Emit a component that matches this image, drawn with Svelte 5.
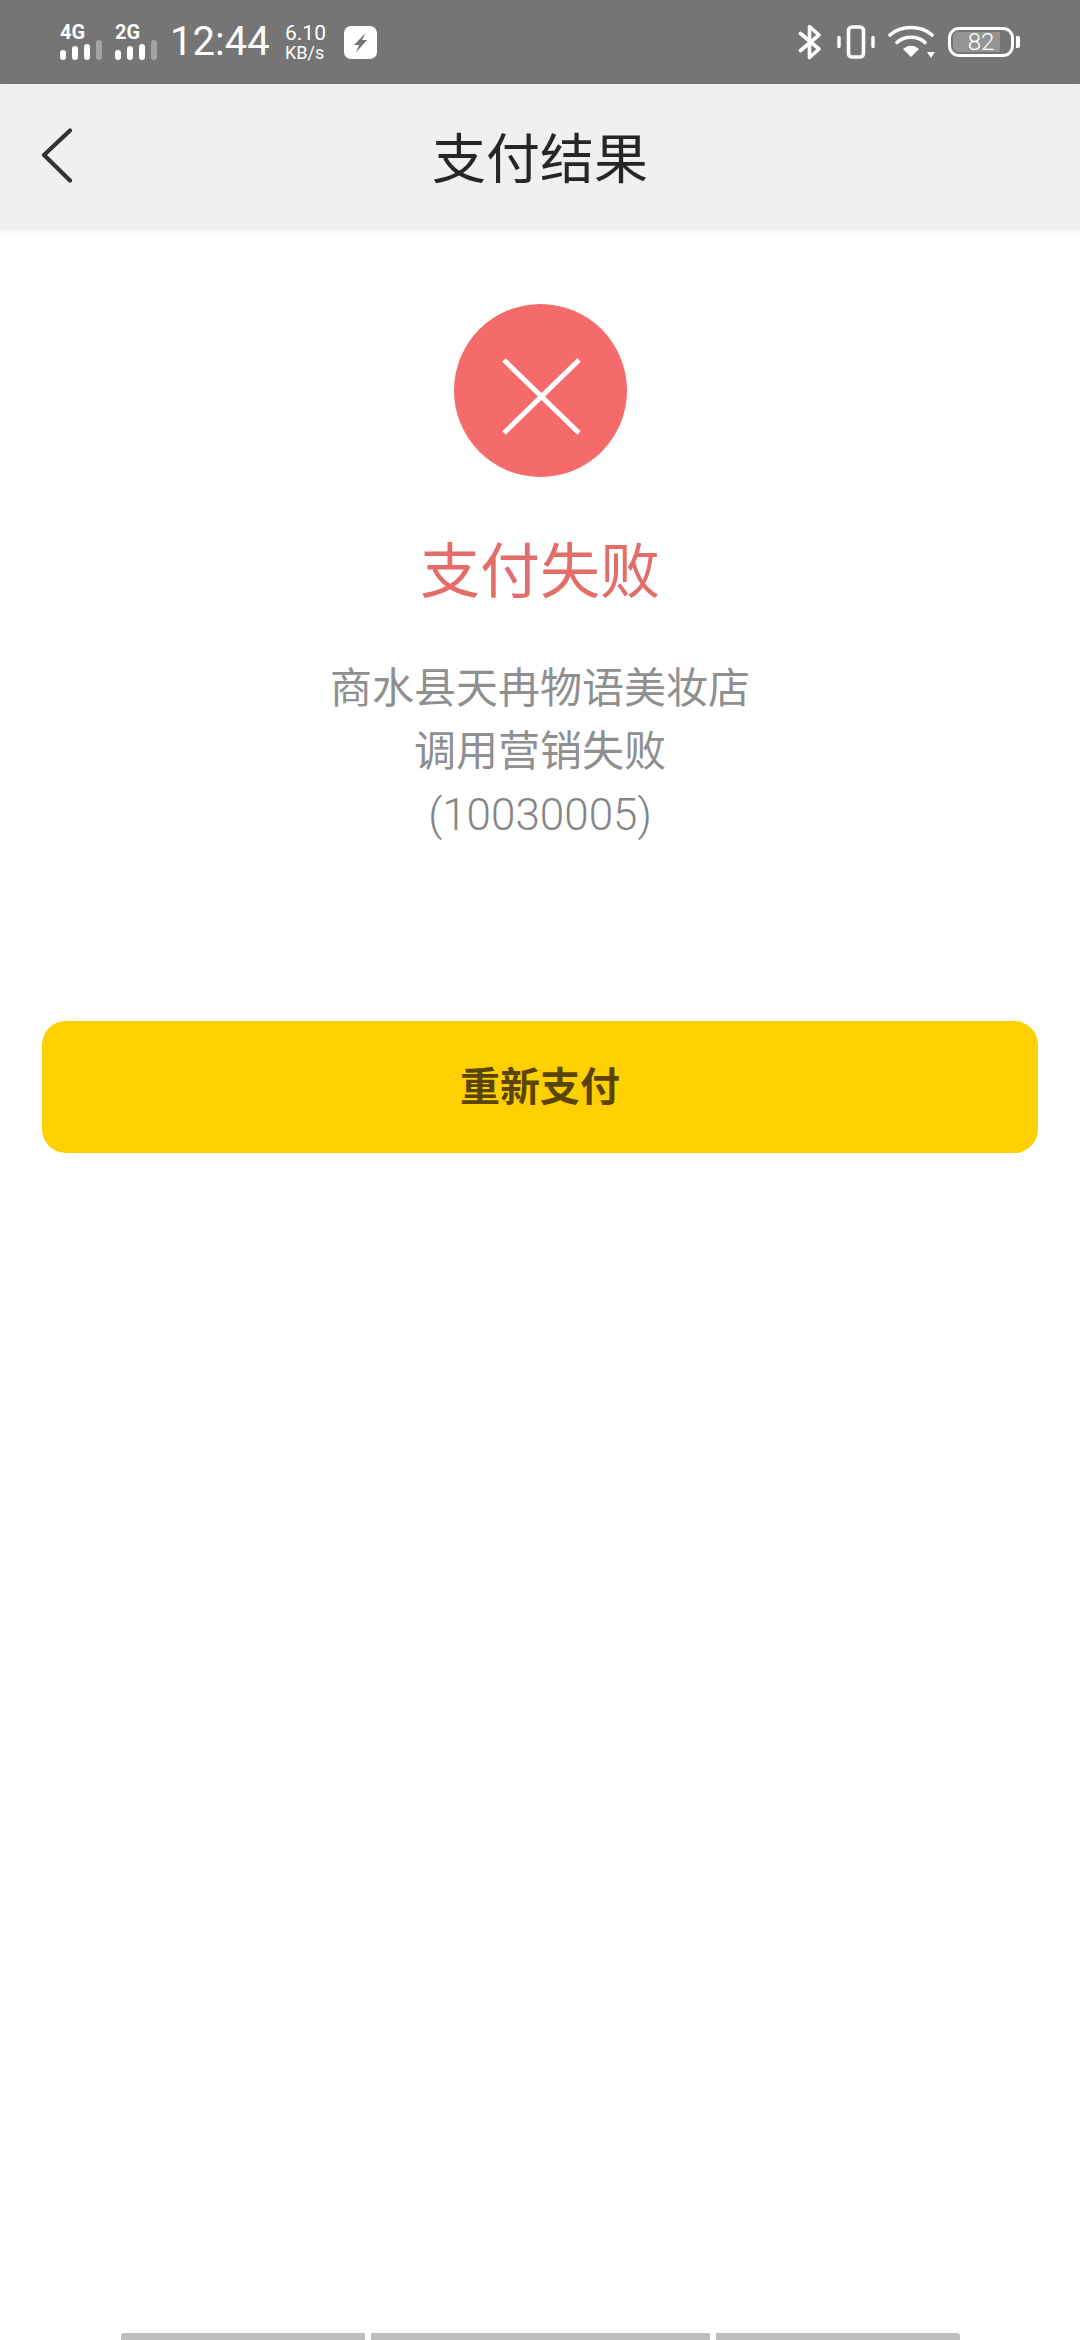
<script lang="ts">
  const signals = [
    { label: '4G', dim: 3 },
    { label: '2G', dim: 3 },
  ];
  const heights = [10, 14, 16, 20];
  const shopLines = ['商水县天冉物语美妆店', '调用营销失败'];
</script>

<div class="page">
  <div class="status">
    <div class="status-left">
      {#each signals as s}
        <div class="signal">
          <span class="net">{s.label}</span>
          <div class="bars">
            {#each heights as h, i}
              <i class:dim={i === s.dim} style="height:{h}px"></i>
            {/each}
          </div>
        </div>
      {/each}
      <span class="time">12:44</span>
      <div class="speed"><span>6.10</span><span class="unit">KB/s</span></div>
      <div class="app-icon">
        <svg viewBox="0 0 33 33" width="33" height="33">
          <path d="M21.5 7 L10 19 H15 L12 26.5 L23 14 H18 Z" fill="#757575" />
        </svg>
      </div>
    </div>
    <div class="status-right">
      <svg class="bt" viewBox="0 0 24 36" width="24" height="36" fill="none" stroke="#fff" stroke-width="3.6" stroke-linecap="round" stroke-linejoin="round">
        <path d="M2.5 9.5 L21 25 L11.5 33.5 V2.5 L21 11 L2.5 26.5" />
      </svg>
      <svg class="vib" viewBox="0 0 38 34" width="38" height="34" fill="none" stroke="#fff">
        <rect x="11.5" y="2" width="15" height="30" rx="3.5" stroke-width="3.6" />
        <path d="M2 12.5 V21.5 M36 12.5 V21.5" stroke-width="3.4" stroke-linecap="round" />
      </svg>
      <svg class="wifi" viewBox="0 0 48 34" width="48" height="34">
        <g fill="none" stroke="#fff" stroke-width="3.6" stroke-linecap="round">
          <path d="M2 10 C13 0 33 0 44 10" />
          <path d="M9 17.5 C16 10.5 30 10.5 37 17.5" />
        </g>
        <path d="M15 24 C20 19.5 26 19.5 31 24 L23 32 Z" fill="#fff" />
        <path d="M39 27 H47 L43 33 Z" fill="#fff" />
      </svg>
      <div class="battery">
        <div class="shell">
          <div class="level"></div>
          <span>82</span>
        </div>
        <div class="tip"></div>
      </div>
    </div>
  </div>

  <header class="nav">
    <svg class="back" viewBox="0 0 32 56" width="32" height="56" fill="none" stroke="#333" stroke-width="4.2" stroke-linecap="round" stroke-linejoin="round">
      <path d="M29 2.5 L3 27 L29 52.5" />
    </svg>
    <h1>支付结果</h1>
  </header>

  <main class="result">
    <div class="fail-icon">
      <svg viewBox="0 0 173 173" width="173" height="173" stroke="#fff" stroke-width="5">
        <path d="M50 56 L125 129 M125 56 L50 129" />
      </svg>
    </div>
    <h2>支付失败</h2>
    <div class="message">
      {#each shopLines as line}
        <p>{line}</p>
      {/each}
      <p class="code">(10030005)</p>
    </div>
    <button type="button" class="retry">重新支付</button>
  </main>

  <footer class="home-bar">
    <span class="seg a"></span>
    <span class="seg b"></span>
    <span class="seg c"></span>
  </footer>
</div>

<style>
  :global(body) {
    margin: 0;
    background: #fff;
  }
  .page {
    width: 1080px;
    height: 2340px;
    overflow: hidden;
    display: flex;
    flex-direction: column;
    background: #fff;
    font-family: "Noto Sans CJK SC", "Liberation Sans", sans-serif;
  }

  .status {
    height: 84px;
    flex: none;
    box-sizing: border-box;
    padding: 0 60px;
    background: #757575;
    color: #fff;
    display: flex;
    justify-content: space-between;
    align-items: center;
    font-family: Roboto, "Liberation Sans", sans-serif;
  }
  .status-left, .status-right { display: flex; align-items: center; }

  .signal {
    width: 42px;
    margin-right: 13px;
    display: flex;
    flex-direction: column;
    gap: 0;
  }
  .net {
    font-size: 20px;
    line-height: 16px;
    font-weight: 700;
  }
  .bars {
    display: flex;
    align-items: flex-end;
    gap: 6px;
    height: 20px;
  }
  .bars i {
    width: 6px;
    background: #fff;
    border-radius: 3px;
  }
  .bars i.dim { background: #a3a3a3; }

  .time {
    width: 115px;
    font-size: 40px;
    font-weight: 400;
    line-height: 44px;
  }
  .speed {
    width: 59px;
    display: flex;
    flex-direction: column;
    font-size: 21px;
    line-height: 21px;
    font-weight: 400;
  }
  .speed .unit { font-size: 18px; line-height: 18px; }
  .app-icon {
    width: 33px;
    height: 33px;
    background: #fff;
    border-radius: 7px;
  }
  .app-icon svg { display: block; }

  .bt { margin-right: 15px; }
  .vib { margin-right: 13px; }
  .wifi { margin-right: 12px; }
  .battery { display: flex; align-items: center; gap: 2px; }
  .shell {
    position: relative;
    width: 66px;
    height: 30px;
    box-sizing: border-box;
    border: 3px solid #fff;
    border-radius: 11px;
    display: flex;
    align-items: center;
    justify-content: center;
    overflow: hidden;
  }
  .level {
    position: absolute;
    left: 2px;
    top: 2px;
    bottom: 2px;
    width: 47px;
    background: #959595;
    border-radius: 5px 0 0 5px;
  }
  .shell span {
    position: relative;
    font-size: 24px;
    font-weight: 300;
    line-height: 24px;
  }
  .tip {
    width: 4px;
    height: 12px;
    background: #fff;
    border-radius: 0 2px 2px 0;
  }

  .nav {
    position: relative;
    height: 146px;
    flex: none;
    box-sizing: border-box;
    padding-bottom: 3px;
    background: #f0f0f0;
    display: flex;
    align-items: center;
    justify-content: center;
    box-shadow: 0 1px 5px rgba(0, 0, 0, 0.08);
  }
  .back {
    position: absolute;
    left: 41px;
    top: 44px;
  }
  .nav h1 {
    margin: 0;
    font-size: 54px;
    font-weight: 400;
    color: #262626;
    line-height: 1;
  }

  .result {
    flex: 1;
    display: flex;
    flex-direction: column;
    align-items: center;
    padding: 74px 42px 0;
  }
  .fail-icon {
    width: 173px;
    height: 173px;
    border-radius: 50%;
    background: #f56a6a;
  }
  .fail-icon svg { display: block; }
  .result h2 {
    margin: 48px 0 0;
    font-size: 60px;
    font-weight: 400;
    line-height: 84px;
    color: #e46c69;
  }
  .message {
    margin-top: 44px;
    text-align: center;
    font-size: 42px;
    line-height: 63px;
    color: #8f8f8f;
  }
  .message p { margin: 0; }
  .message .code {
    margin-top: 5px;
    font-family: Roboto, "Liberation Sans", sans-serif;
    font-size: 44px;
    font-weight: 300;
    color: #858585;
  }
  .retry {
    margin-top: 174px;
    width: 100%;
    height: 132px;
    flex: none;
    padding: 0 0 7px;
    border: 0;
    border-radius: 24px;
    background: #ffd000;
    color: #5a4400;
    font-family: inherit;
    font-size: 40px;
    font-weight: 700;
  }

  .home-bar {
    flex: none;
    height: 7px;
    display: flex;
    justify-content: center;
    gap: 6px;
  }
  .seg {
    height: 7px;
    background: #bebebe;
  }
  .seg.a { width: 244px; border-radius: 3px 0 0 0; }
  .seg.b { width: 339px; }
  .seg.c { width: 244px; border-radius: 0 3px 0 0; }
</style>
